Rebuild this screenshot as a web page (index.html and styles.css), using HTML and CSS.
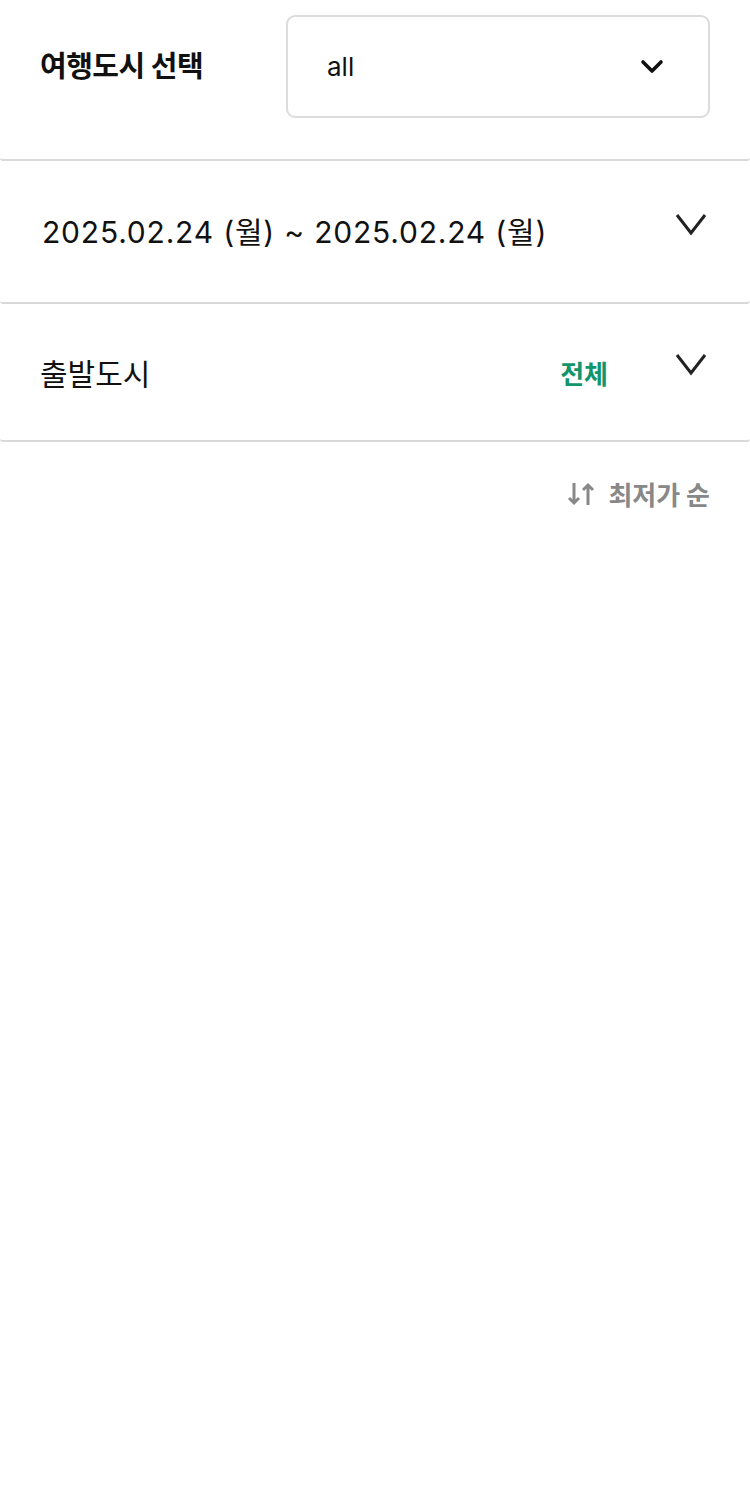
FILE: index.html
```html
<!DOCTYPE html>
<html>
<head>
    <title>여행도시 선택</title>
    <link rel="stylesheet" href="styles.css">
</head>
<body>
    <div class="filters">
        <div class="row city">
            <label for="city">여행도시 선택</label>
            <div class="select" id="city">
                <span>all</span>
                <svg class="chev-bold" width="24" height="18" viewBox="0 0 24 18"><path d="M3 4l9 9 9-9" fill="none" stroke="#111" stroke-width="3.6" stroke-linecap="round" stroke-linejoin="round"/></svg>
            </div>
        </div>
        <div class="row date">
            <span class="date-text">2025.02.24 (월) ~ 2025.02.24 (월)</span>
            <svg class="chev" width="32" height="24" viewBox="0 0 32 24"><path d="M2 2l14 18 14-18" fill="none" stroke="#222" stroke-width="3"/></svg>
        </div>
        <div class="row depart">
            <span class="depart-label">출발도시</span>
            <span class="depart-value">전체</span>
            <svg class="chev" width="32" height="24" viewBox="0 0 32 24"><path d="M2 2l14 18 14-18" fill="none" stroke="#222" stroke-width="3"/></svg>
        </div>
        <div class="sort">
            <svg width="30" height="26" viewBox="0 0 30 26"><path d="M6 2v20M1 17l5 5 5-5M20 24V4M15 9l5-5 5 5" fill="none" stroke="#888" stroke-width="3"/></svg>
            <span>최저가 순</span>
        </div>
    </div>
</body>
</html>
```

FILE: styles.css
```css
body { margin: 0; font-family: "Inter", "Noto Sans CJK KR", "Noto Sans", sans-serif; color: #111; background: #fff; }
.filters { width: 750px; }
.row { display: flex; align-items: center; padding: 0 41px 0 40px; border-bottom: 2px solid #d9d9d9; border-radius: 0 0 3px 3px; }
.city { height: 161px; box-sizing: border-box; justify-content: space-between; align-items: flex-start; padding-top: 15px; }
.city label { font-size: 29px; font-weight: 700; letter-spacing: -0.5px; margin-top: 28px; font-family: "Noto Sans CJK KR", sans-serif; }
.select { width: 424px; height: 103px; box-sizing: border-box; border: 2px solid #dcdcdc; border-radius: 9px; display: flex; align-items: center; justify-content: space-between; padding: 0 44px 0 39px; margin-right: -1px; }
.select span { font-size: 26px; }
.date { height: 141px; justify-content: space-between; }
.date-text { font-size: 30px; letter-spacing: 0.8px; margin: -4px 0 0 2px; }
.chev { margin-top: -14px; margin-right: 2px; }
.depart { height: 136px; }
.depart-label { font-size: 30px; flex: 1; font-family: "Noto Sans CJK KR", sans-serif; }
.depart-value { font-size: 26px; font-weight: 700; color: #12956b; margin-right: 67px; font-family: "Noto Sans CJK KR", sans-serif; }
.sort { display: flex; justify-content: flex-end; align-items: center; gap: 10px; padding: 33px 40px 0 0; }
.sort span { font-size: 26px; font-weight: 700; color: #888; font-family: "Noto Sans CJK KR", sans-serif; }
```
